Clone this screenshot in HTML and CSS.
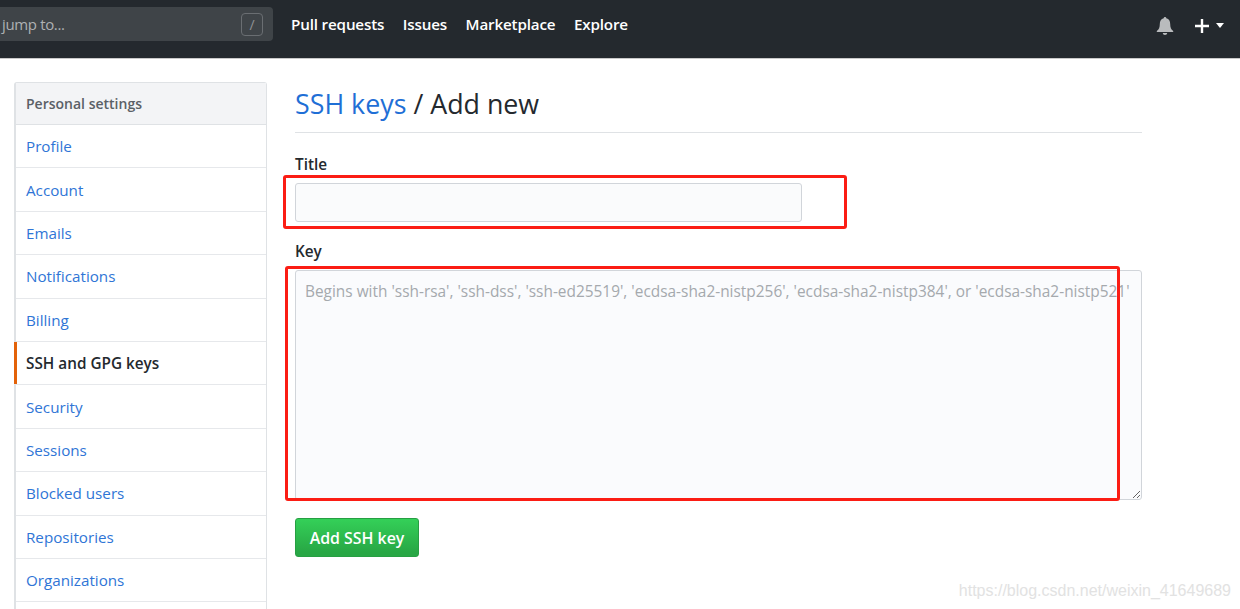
FILE: index.html
```html
<!DOCTYPE html>
<html lang="en">
<head>
<meta charset="utf-8">
<title>SSH keys / Add new</title>
<link rel="stylesheet" href="styles.css">
</head>
<body>
<header class="topbar">
  <div class="search">
    <span class="search-text">jump to...</span>
    <span class="slash-key">/</span>
  </div>
  <nav class="topnav">
    <a href="#">Pull requests</a>
    <a href="#">Issues</a>
    <a href="#">Marketplace</a>
    <a href="#">Explore</a>
  </nav>
  <div class="top-actions">
    <svg class="bell" width="18" height="20" viewBox="0 0 18 20"><path fill="#b9bbbd" d="M9 1c.8 0 1.300.6 1.300 1.300C13 3 14.200 5.200 14.200 8c0 3.500.8 5.300 3 7v1H.8v-1c2.200-1.700 3-3.500 3-7 0-2.800 1.200-5 3.900-5.700C7.700 1.600 8.200 1 9 1zM6.800 17h4.400c0 1.200-1 2-2.200 2s-2.200-.8-2.200-2z"/></svg>
    <svg class="plus" width="16" height="16" viewBox="0 0 16 16"><path fill="#fff" d="M6.800 1h2.400v5.800H15v2.400H9.200V15H6.800V9.200H1V6.800h5.800z"/></svg>
    <span class="caret"></span>
  </div>
</header>
<div class="page">
  <aside class="menu">
    <h3 class="menu-head">Personal settings</h3>
    <a class="menu-item" href="#">Profile</a>
    <a class="menu-item" href="#">Account</a>
    <a class="menu-item" href="#">Emails</a>
    <a class="menu-item" href="#">Notifications</a>
    <a class="menu-item" href="#">Billing</a>
    <a class="menu-item selected" href="#">SSH and GPG keys</a>
    <a class="menu-item" href="#">Security</a>
    <a class="menu-item" href="#">Sessions</a>
    <a class="menu-item" href="#">Blocked users</a>
    <a class="menu-item" href="#">Repositories</a>
    <a class="menu-item" href="#">Organizations</a>
    <a class="menu-item" href="#"></a>
  </aside>
  <main class="content">
    <h2 class="title"><a href="#">SSH keys</a> / Add new</h2>
    <form class="form">
      <label class="label label-title" for="t">Title</label>
      <input class="field-title" id="t" type="text">
      <label class="label label-key" for="k">Key</label>
      <textarea class="field-key" id="k" placeholder="Begins with 'ssh-rsa', 'ssh-dss', 'ssh-ed25519', 'ecdsa-sha2-nistp256', 'ecdsa-sha2-nistp384', or 'ecdsa-sha2-nistp521'"></textarea>
      <button class="btn" type="button">Add SSH key</button>
    </form>
  </main>
</div>
<div class="mark mark-title"></div>
<div class="mark mark-key"></div>
<div class="watermark">https://blog.csdn.net/weixin_41649689</div>
</body>
</html>
```
FILE: styles.css
```css
* { box-sizing: border-box; }
html, body { height: 100%; }
body {
  margin: 0;
  height: 609px;
  overflow: hidden;
  background: #fff;
  color: #24292e;
  font-family: "Open Sans", "Noto Sans", sans-serif;
  font-size: 15px;
}
a { text-decoration: none; color: #2f75d6; }

.topbar {
  height: 59px;
  background: #24292e;
  border-bottom: 1px solid #c9c9c9;
  display: flex;
  align-items: center;
  padding-bottom: 10px;
}
.search {
  width: 273px;
  height: 34px;
  background: #3f4448;
  border-radius: 0 4px 4px 0;
  display: flex;
  align-items: center;
  justify-content: space-between;
  padding: 0 10px 0 2px;
}
.search-text { color: #aeb1b3; font-size: 15px; letter-spacing: -0.35px; }
.slash-key {
  width: 22px;
  height: 23px;
  border: 1px solid #6a6e72;
  border-radius: 4px;
  color: #8f9295;
  font-size: 14px;
  display: flex;
  align-items: center;
  justify-content: center;
}
.topnav {
  display: flex;
  gap: 18.500px;
  margin-left: 18px;
}
.topnav a {
  color: #fff;
  font-size: 15.200px;
  font-weight: 600;
  letter-spacing: -0.16px;
}
.top-actions {
  margin-left: auto;
  margin-top: 3px;
  display: flex;
  align-items: center;
  padding-right: 16px;
}
.bell { margin-right: 20px; }
.plus { margin-right: 6px; }
.caret {
  border-style: solid;
  border-width: 5px 4.500px 0;
  border-color: #fff transparent transparent;
}

.page {
  display: flex;
  height: 550px;
  overflow: hidden;
  padding: 23px 98px 0 14px;
  gap: 28px;
  align-items: flex-start;
}
.menu {
  width: 253px;
  flex: none;
  border: 1px solid #dfe2e5;
  border-left-width: 2px;
  border-bottom: 0;
  border-radius: 3px 3px 0 0;
}
.menu-head {
  margin: 0;
  height: 42px;
  background: #f3f4f6;
  border-bottom: 1px solid #dfe2e5;
  color: #5a6066;
  font-size: 14px;
  font-weight: 600;
  display: flex;
  align-items: center;
  padding-left: 10px;
}
.menu-item {
  display: flex;
  align-items: center;
  height: 43.400px;
  padding-left: 10px;
  border-bottom: 1px solid #e6e8eb;
  font-size: 15.200px;
}
.menu-item.selected {
  color: #24292e;
  font-weight: 600;
  font-size: 15.300px;
  box-shadow: inset 3px 0 0 #e36209;
  margin-left: -2px;
  padding-left: 12px;
}

.content { flex: 1; min-width: 0; }
.title {
  margin: 0;
  height: 51px;
  padding-top: 1px;
  border-bottom: 1px solid #dfe2e5;
  font-size: 26.800px;
  font-weight: 400;
  line-height: 41px;
  color: #24292e;
}
.title a { color: #1f6fd6; }
.form { display: flex; flex-direction: column; align-items: flex-start; }
.label { font-size: 15.300px; font-weight: 600; line-height: 20px; }
.label-title { margin-top: 21px; }
.label-key { margin-top: 19px; }
.field-title {
  width: 507px;
  height: 39px;
  margin-top: 9px;
  background: #fafbfc;
  border: 1px solid #d1d5da;
  border-radius: 3px;
}
.field-key {
  width: 847px;
  height: 230px;
  margin-top: 9px;
  padding: 10px 9px 9px;
  background: #fafbfd;
  border: 1px solid #d1d5da;
  border-radius: 3px;
  font-family: "Open Sans", "Noto Sans", sans-serif;
  font-size: 15.420px;
  line-height: 22px;
  white-space: pre;
  overflow: hidden;
}
.field-key::placeholder { color: #a5a9ad; opacity: 1; }
.btn {
  width: 124px;
  height: 39px;
  margin-top: 18px;
  border: 1px solid #279f43;
  border-radius: 3px;
  background: linear-gradient(#34d058, #28a745 90%);
  color: #fff;
  font-family: "Open Sans", "Noto Sans", sans-serif;
  font-size: 15.900px;
  font-weight: 600;
  padding: 0;
}

.mark {
  position: absolute;
  border: 3px solid #fb1d14;
  border-radius: 3px;
  pointer-events: none;
}
.mark-title { left: 283px; top: 175px; width: 564px; height: 54px; }
.mark-key { left: 285px; top: 266px; width: 835px; height: 235px; }
.watermark {
  position: absolute;
  right: 9px;
  top: 582px;
  color: #e2e2e2;
  font-family: "Liberation Sans", sans-serif;
  font-size: 16px;
}
```
